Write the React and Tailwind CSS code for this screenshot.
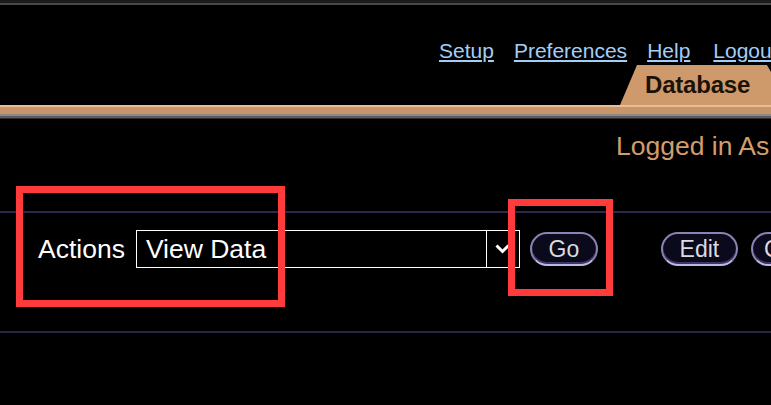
import React from "react";

function PillButton({ label, className = "" }) {
  return (
    <button
      className={
        "h-[34px] shrink-0 rounded-full border-2 border-[#8a84b4] border-b-[#bdb6e6] bg-[#0a0a1c] text-[23px] leading-none text-[#dcdcdc] shadow-[inset_0_-2px_0_#3c3760] " +
        className
      }
    >
      {label}
    </button>
  );
}

export default function App() {
  return (
    <div className="relative w-[771px] h-[405px] overflow-hidden bg-black font-['Liberation_Sans',Arial,sans-serif]">
      {/* top edge */}
      <div className="h-[3px] bg-[#1a1a1a]" />
      <div className="h-[2px] bg-[#484848]" />

      {/* header links */}
      <div className="flex gap-5 pl-[439px] pt-[34px] pb-[2px] text-[21px] leading-[24px] whitespace-nowrap">
        <a className="shrink-0 text-[#a2cef7] underline underline-offset-2">Setup</a>
        <a className="shrink-0 text-[#a2cef7] underline underline-offset-2">Preferences</a>
        <a className="shrink-0 text-[#a2cef7] underline underline-offset-2">Help</a>
        <a className="ml-[3px] shrink-0 text-[#a2cef7] underline underline-offset-2">Logout</a>
      </div>

      {/* tab */}
      <div className="flex pl-[620px]">
        <div className="h-[40px] w-[170px] shrink-0 bg-[#cf9a6b] pl-[25px] pt-[6px] [clip-path:polygon(17px_0,147px_0,170px_100%,0_100%)]">
          <span className="text-[24px] font-bold leading-[28px] text-[#1a1208] tracking-[-0.2px]">Database</span>
        </div>
      </div>

      {/* orange bar */}
      <div className="h-[2px] bg-[#ecbd90]" />
      <div className="h-[7px] bg-[#c8956a]" />
      <div className="h-[2px] bg-[#8d8a86]" />
      <div className="h-[2px] bg-[#5c5c5c]" />
      <div className="h-[1px] bg-[#2c2c2c]" />

      {/* logged in */}
      <div className="pl-[616px] pt-[12px] text-[26.5px] leading-[30px] text-[#d29d6d] whitespace-nowrap">
        Logged in As
      </div>

      <div className="mt-[50px] h-[2px] bg-[#2e2850]" />

      {/* actions row */}
      <div className="flex items-center pl-[38px] pt-[17px] whitespace-nowrap">
        <span className="shrink-0 text-[26.5px] leading-[30px] text-white">Actions</span>
        <div className="ml-[11px] flex h-[38px] w-[384px] shrink-0 border border-white bg-black">
          <div className="flex flex-1 items-center pl-[9px] text-[26.5px] leading-[30px] text-white">View Data</div>
          <div className="flex w-[33px] items-center justify-center border-l border-white">
            <svg width="15" height="10" viewBox="0 0 15 10">
              <path d="M1.5 1.5 L7.5 7.5 L13.5 1.5" fill="none" stroke="#fff" strokeWidth="3" />
            </svg>
          </div>
        </div>
        <PillButton label="Go" className="ml-[10px] w-[68px] text-[22px]" />
        <PillButton label="Edit" className="ml-[63px] w-[77px]" />
        <PillButton label="Copy" className="ml-[13px] w-[80px]" />
      </div>

      <div className="mt-[63px] h-[2px] bg-[#2a2545]" />

      {/* annotation boxes */}
      <div className="absolute left-[16px] top-[186px] h-[121px] w-[269px] border-[7px] border-[#ff3b3b]" />
      <div className="absolute left-[508px] top-[199px] h-[97px] w-[105px] border-[7px] border-[#ff3b3b]" />
    </div>
  );
}
